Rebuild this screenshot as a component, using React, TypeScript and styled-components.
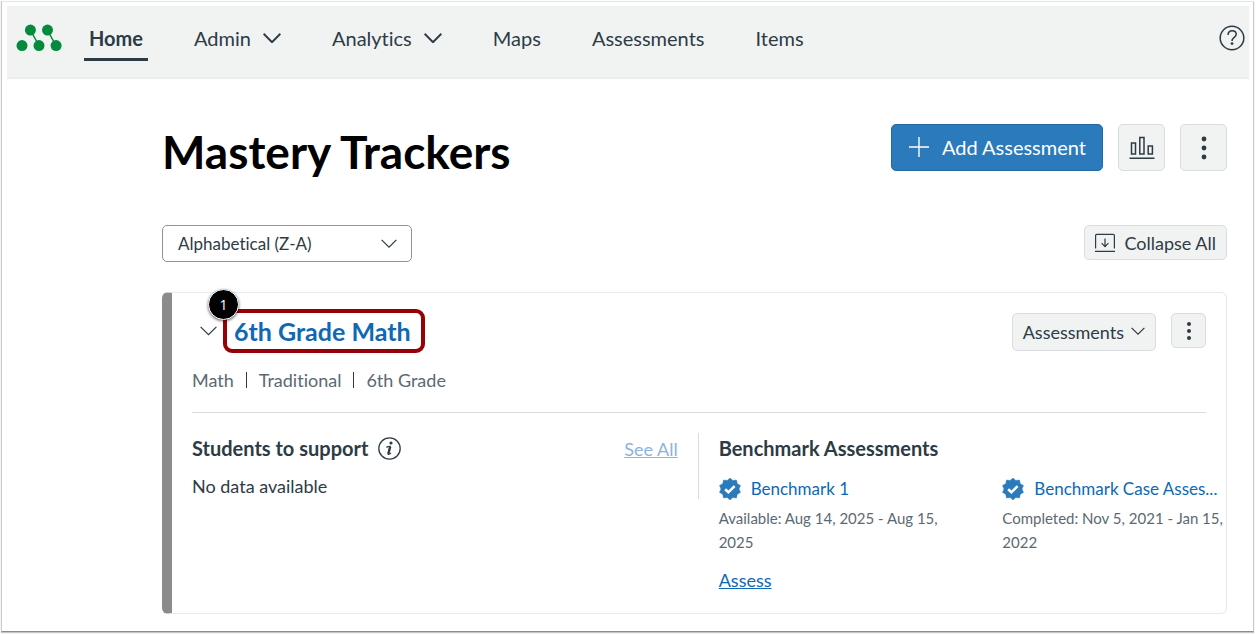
import React from "react";
import styled, { createGlobalStyle, css } from "styled-components";

const ink = "#2d3b45";
const muted = "#5b6973";
const blue = "#0e68b3";
const brand = "#2b7abc";
const surface = "#f1f3f3";
const line = "#d9dcde";

const GlobalStyle = createGlobalStyle`
  *, *::before, *::after { box-sizing: border-box; }
  body {
    margin: 0;
    background: #fff;
    color: ${ink};
    font-family: Lato, "Liberation Sans", sans-serif;
    font-size: 18px;
    line-height: 24px;
    font-variant-ligatures: none;
  }
  h1, h2, h3, p, ul { margin: 0; padding: 0; }
  button, select { font: inherit; color: inherit; cursor: pointer; }
  svg { display: block; flex: none; }
`;

const Frame = styled.div`
  margin: 1px 2px 3px 1px;
  padding: 4px 4px 17px 5px;
  border: 1px solid #c9c9c9;
  border-top-color: #e4e4e4;
  border-bottom-color: #8c8c8c;
  box-shadow: 0 1px 1px #c4c4c4;
`;

const Header = styled.header`
  display: flex;
  align-items: flex-start;
  height: 73px;
  padding: 18px 4px 0 9px;
  background: ${surface};
  border-bottom: 2px solid #eceeee;
`;

const Logo = styled.a`
  margin-right: 22px;
`;

const Nav = styled.nav`
  display: flex;
  flex: 1;
  gap: 41px;
`;

const NavLink = styled.a<{ $active?: boolean }>`
  display: flex;
  align-items: center;
  gap: 12px;
  height: 37px;
  padding: 0 5px 7px;
  color: ${ink};
  font-size: 20px;
  text-decoration: none;
  border-bottom: 3px solid transparent;
  ${(p) => p.$active && css`
    font-weight: 700;
    border-bottom-color: ${ink};
  `}
`;

const HelpButton = styled.button`
  padding: 1px 0 0;
  border: 0;
  background: none;
`;

const Main = styled.main`
  margin: 45px 22px 0 155px;
`;

const Row = styled.div`
  display: flex;
  justify-content: space-between;
  align-items: flex-start;
`;

const Title = styled.h1`
  color: #000;
  font-size: 46px;
  line-height: 56px;
  font-weight: 700;
`;

const Actions = styled.div`
  display: flex;
  align-items: flex-start;
  gap: 15px;
`;

const Button = styled.button`
  display: flex;
  align-items: center;
  justify-content: center;
  gap: 9px;
  height: 35px;
  padding: 0 10px;
  border: 1px solid ${line};
  border-radius: 5px;
  background: ${surface};
  white-space: nowrap;
`;

const PrimaryButton = styled(Button)`
  gap: 12px;
  height: 47px;
  padding: 0 16px 2px;
  color: #fff;
  font-size: 20px;
  background: ${brand};
  border-color: #2369a4;
`;

const SquareButton = styled(Button)<{ $size: number }>`
  width: ${(p) => p.$size}px;
  height: ${(p) => p.$size}px;
  padding: 0;
`;

const MenuButton = styled(Button)`
  gap: 7px;
  height: 38px;
`;

const FilterRow = styled(Row)`
  margin-top: 45px;
`;

const SelectBox = styled.label`
  display: grid;
  align-items: center;
  width: 250px;

  & > * { grid-area: 1 / 1; }
  & > svg {
    justify-self: end;
    margin-right: 15px;
    pointer-events: none;
  }
`;

const Select = styled.select`
  appearance: none;
  width: 100%;
  height: 37px;
  padding: 0 40px 0 15px;
  border: 1px solid #8a959e;
  border-radius: 5px;
  background: #fff;
  font-size: 17px;
`;

const Card = styled.section`
  margin-top: 30px;
  min-height: 322px;
  border: 1px solid #e8eaeb;
  border-left: 10px solid #8b8b8b;
  border-radius: 6px;
`;

const CardTop = styled.div`
  margin: 0 20px;
  padding-bottom: 20px;
  border-bottom: 1px solid ${line};
`;

const CardHead = styled(Row)`
  padding-top: 16px;
`;

const CardActions = styled(Actions)`
  padding-top: 4px;
`;

const CardTitle = styled.h2`
  display: flex;
  align-items: center;
  margin-left: 8px;
  font-size: 25px;
  line-height: 36px;
`;

const ToggleButton = styled.button`
  padding: 0;
  margin-right: 6px;
  border: 0;
  background: none;
`;

const Highlight = styled.span`
  position: relative;
  display: block;
  padding: 0 10px 0 7px;
  border: 4px solid #960007;
  border-radius: 9px;
`;

const Step = styled.span`
  position: absolute;
  top: -24px;
  left: -19px;
  width: 31px;
  height: 31px;
  border: 1px solid #fff;
  border-radius: 50%;
  background: #000;
  box-shadow: 0 1px 3px rgba(0, 0, 0, 0.6);
  color: #fff;
  font: 14px/29px "Open Sans", sans-serif;
  text-align: center;
`;

const Link = styled.a<{ $faded?: boolean; $underlined?: boolean }>`
  color: ${(p) => (p.$faded ? "#8db3da" : blue)};
  text-decoration: ${(p) => (p.$underlined ? "underline" : "none")};
`;

const Meta = styled.ul`
  display: flex;
  align-items: center;
  margin-top: 15px;
  color: ${muted};
  list-style: none;

  li + li {
    display: flex;
    align-items: center;
  }
  li + li::before {
    content: "";
    width: 1px;
    height: 16px;
    margin: 0 12px;
    background: ${ink};
  }
`;

const CardBody = styled.div`
  display: grid;
  grid-template-columns: 49fr 51fr;
  align-items: start;
  margin-left: 20px;
  padding-top: 20px;
`;

const Support = styled.div`
  height: 66px;
  padding-right: 20px;
  border-right: 1px solid ${line};
`;

const Heading = styled.h3`
  display: flex;
  align-items: center;
  gap: 10px;
  height: 30px;
  font-size: 20px;
`;

const Note = styled.p`
  margin-top: 11px;
`;

const SeeAll = styled.div`
  padding-top: 4px;
`;

const Benchmarks = styled.div`
  min-width: 0;
  padding-left: 20px;
`;

const BenchmarkGrid = styled.div`
  display: grid;
  grid-template-columns: 1fr 1fr;
  gap: 60px;
  margin-top: 14px;
`;

const Benchmark = styled.article`
  min-width: 0;
`;

const BenchmarkName = styled.div`
  display: flex;
  align-items: center;
  gap: 10px;
  font-size: 17px;
  white-space: nowrap;
`;

const Dates = styled.p`
  margin: 5px 0 14px;
  color: ${muted};
  font-size: 15px;
`;

const Chevron = ({ size = 16, weight = 1.2 }: { size?: number; weight?: number }) => (
  <svg width={size} height="10" viewBox={`0 0 ${size} 10`} fill="none" stroke="currentColor" strokeWidth={weight} aria-hidden="true">
    <path d={`M.6 .8l${size / 2 - 0.6} ${size / 2 - 0.6} ${size / 2 - 0.6}-${size / 2 - 0.6}`} />
  </svg>
);

const Kebab = ({ gap, r }: { gap: number; r: number }) => (
  <svg width="8" height="26" viewBox="0 0 8 26" fill="currentColor" aria-hidden="true">
    <circle cx="4" cy={13 - gap} r={r} />
    <circle cx="4" cy="13" r={r} />
    <circle cx="4" cy={13 + gap} r={r} />
  </svg>
);

const Verified = () => {
  const points = Array.from({ length: 20 }, (_, i) => {
    const angle = (i * Math.PI) / 10 - Math.PI / 2;
    const radius = i % 2 ? 9 : 11;
    return `${11 + radius * Math.cos(angle)},${11 + radius * Math.sin(angle)}`;
  }).join(" ");
  return (
    <svg width="22" height="22" viewBox="0 0 22 22" aria-hidden="true">
      <polygon points={points} fill={brand} stroke={brand} strokeWidth="0.5" strokeLinejoin="round" />
      <path d="M6.2 11.2l3.2 3.1 6.2-6.2" fill="none" stroke="#fff" strokeWidth="2.6" />
    </svg>
  );
};

const navItems = [
  { label: "Home", active: true },
  { label: "Admin", menu: true },
  { label: "Analytics", menu: true },
  { label: "Maps" },
  { label: "Assessments" },
  { label: "Items" },
];

const benchmarks = [
  { name: "Benchmark 1", dates: "Available: Aug 14, 2025 - Aug 15, 2025", assess: true },
  { name: "Benchmark Case Asses...", dates: "Completed: Nov 5, 2021 - Jan 15, 2022" },
];

export default function App() {
  return (
    <>
      <GlobalStyle />
      <Frame>
        <Header>
          <Logo href="#" aria-label="Mastery">
            <svg width="46" height="28" viewBox="0 0 46 28" fill="#048a3d" stroke="#048a3d">
              <path d="M14.4 6.2l8.6 15.4M31.4 6.2L40 21.6" strokeWidth="1.4" />
              <g stroke="none">
                <circle cx="14.4" cy="6.1" r="5.5" />
                <circle cx="31.5" cy="6.1" r="5.5" />
                <circle cx="6" cy="21.6" r="5.5" />
                <circle cx="23" cy="21.6" r="5.5" />
                <circle cx="40.1" cy="21.6" r="5.5" />
              </g>
            </svg>
          </Logo>
          <Nav>
            {navItems.map((item) => (
              <NavLink key={item.label} href="#" $active={item.active}>
                {item.label}
                {item.menu && <Chevron size={18} weight={2} />}
              </NavLink>
            ))}
          </Nav>
          <HelpButton aria-label="Help">
            <svg width="26" height="26" viewBox="0 0 26 26" fill="none" stroke="currentColor" strokeWidth="1.5">
              <circle cx="13" cy="13" r="11.8" />
              <path d="M9 9.9c0-2.6 1.8-4.1 4.1-4.1s4.1 1.4 4.1 3.5c0 3.2-4.2 3.1-4.2 6.7" />
              <circle cx="13" cy="18.6" r="1.4" fill="currentColor" stroke="none" />
            </svg>
          </HelpButton>
        </Header>

        <Main>
          <Row>
            <Title>Mastery Trackers</Title>
            <Actions>
              <PrimaryButton>
                <svg width="22" height="22" viewBox="0 0 22 22" stroke="currentColor" strokeWidth="1.4" aria-hidden="true">
                  <path d="M11 1v20M1 11h20" />
                </svg>
                Add Assessment
              </PrimaryButton>
              <SquareButton $size={47} aria-label="Reports">
                <svg width="26" height="24" viewBox="0 0 26 24" fill="none" stroke="currentColor" strokeWidth="1.5" aria-hidden="true">
                  <path d="M2.5 7h4v11h-4zM10.8 1.5h4.2V18h-4.2zM19.2 10h4.2v8h-4.2zM.5 22.2h25" />
                </svg>
              </SquareButton>
              <SquareButton $size={47} aria-label="More options">
                <Kebab gap={9} r={2.4} />
              </SquareButton>
            </Actions>
          </Row>

          <FilterRow>
            <SelectBox>
              <Select aria-label="Sort order" defaultValue="za">
                <option value="za">Alphabetical (Z-A)</option>
                <option value="az">Alphabetical (A-Z)</option>
              </Select>
              <Chevron />
            </SelectBox>
            <Button>
              <svg width="20" height="20" viewBox="0 0 20 20" fill="none" stroke="currentColor" strokeWidth="1.2" aria-hidden="true">
                <path d="M.6 15.5V2.6Q.6 1.4 1.8 1.4h16.4q1.2 0 1.2 1.2v12.9M0 18.3h20M10 5.5v8M6.6 10.2l3.4 3.4 3.4-3.4" />
              </svg>
              Collapse All
            </Button>
          </FilterRow>

          <Card>
            <CardTop>
              <CardHead>
                <CardTitle>
                  <ToggleButton aria-label="Collapse 6th Grade Math">
                    <Chevron size={17} />
                  </ToggleButton>
                  <Highlight>
                    <Link href="#">6th Grade Math</Link>
                    <Step>1</Step>
                  </Highlight>
                </CardTitle>
                <CardActions>
                  <MenuButton>
                    Assessments
                    <Chevron size={14} />
                  </MenuButton>
                  <SquareButton $size={35} aria-label="Tracker options">
                    <Kebab gap={7} r={2} />
                  </SquareButton>
                </CardActions>
              </CardHead>
              <Meta>
                <li>Math</li>
                <li>Traditional</li>
                <li>6th Grade</li>
              </Meta>
            </CardTop>

            <CardBody>
              <Support>
                <Row>
                  <Heading>
                    Students to support
                    <svg width="23" height="23" viewBox="0 0 23 23" fill="none" stroke="currentColor" strokeWidth="1.3" role="img" aria-label="Information">
                      <circle cx="11.5" cy="11.5" r="10.7" />
                      <circle cx="13" cy="6" r="1.6" fill="currentColor" stroke="none" />
                      <path d="M8.4 10.4c1.4-.9 2.6-1.1 3.6-1.1l-1.9 7.2c-.3 1.3.8 1.2 2.9-.6" />
                      <path d="M12.3 9.6l-1.9 7" strokeWidth="2.2" />
                    </svg>
                  </Heading>
                  <SeeAll>
                    <Link href="#" $faded $underlined>See All</Link>
                  </SeeAll>
                </Row>
                <Note>No data available</Note>
              </Support>
              <Benchmarks>
                <Heading>Benchmark Assessments</Heading>
                <BenchmarkGrid>
                  {benchmarks.map((item) => (
                    <Benchmark key={item.name}>
                      <BenchmarkName>
                        <Verified />
                        <Link href="#">{item.name}</Link>
                      </BenchmarkName>
                      <Dates>{item.dates}</Dates>
                      {item.assess && <Link href="#" $underlined>Assess</Link>}
                    </Benchmark>
                  ))}
                </BenchmarkGrid>
              </Benchmarks>
            </CardBody>
          </Card>
        </Main>
      </Frame>
    </>
  );
}
